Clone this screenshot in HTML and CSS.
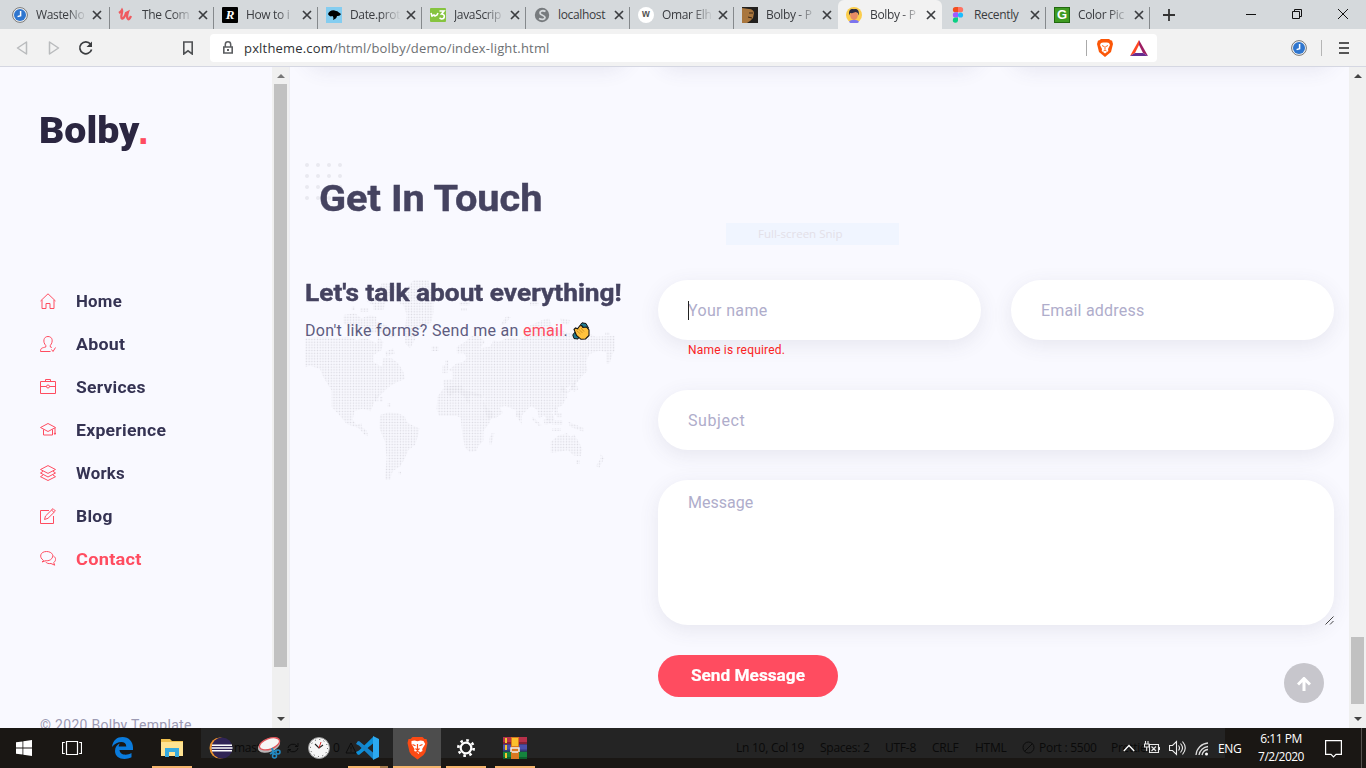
FILE: index.html
```html
<!DOCTYPE html>
<html lang="en">
<head>
<meta charset="utf-8">
<title>Bolby - Portfolio</title>
<link rel="stylesheet" href="styles.css">
</head>
<body>
<svg class="defs" width="0" height="0">
  <defs>
    <symbol id="x" viewBox="0 0 10 10"><path d="M1 1l8 8M9 1L1 9" stroke="#3b3d40" stroke-width="1.7" fill="none"/></symbol>
    <symbol id="clockblue" viewBox="0 0 16 16"><circle cx="8" cy="8" r="7.4" fill="#f4f4f4" stroke="#777" stroke-width="1"/><circle cx="8" cy="8" r="6" fill="#2f76cf"/><path d="M8.600 4v4.600L5.600 9.600" stroke="#fff" stroke-width="1.500" fill="none"/></symbol>
    <symbol id="lion" viewBox="0 0 20 24"><path d="M5 1h10l2 2 2 0 1 4-2 9-2 3-6 4.500-6-4.500-2-3L0 7l1-4 2 0z" fill="#fb4a14"/><path d="M4 5l3-.5 3 .8 3-.8 3 .5 1.700 3-3 5 .3 2-3 1.500-1 1.500-1.300-1.500-3-1.500.3-2-3-5z" fill="#fff"/><path d="M5 8.500l3 1.300M15 8.500l-3 1.300M10 8v6M8 12.500l2 2 2-2M7.500 16.500l2.500-1 2.500 1" stroke="#fb4a14" stroke-width="1.200" fill="none"/></symbol>
    <symbol id="lion-small" viewBox="0 0 16 18"><path d="M4 0h8l2 1.500h1L16 5l-2 8-6 5-6-5L0 5l1-3.500h1z" fill="#fb5607"/><path d="M4 4l2-.5h4l2 .5 1 2-2 4 .3 2L8 14.500 4.700 12 5 10 3 6z" fill="#fff"/><path d="M5 6.500l2 1M11 6.500l-2 1M8 7v3.500M6.500 12L8 11l1.500 1" stroke="#fb5607" stroke-width=".9" fill="none"/></symbol>
    <pattern id="dots" x="15" y="30" width="8.300" height="8.300" patternUnits="userSpaceOnUse"><rect x="2" y="2" width="4.200" height="4.200" fill="#dad9e1"/></pattern>
  </defs>
</svg>

<div class="tabs">
  <div class="tab first"><svg class="fav"><use href="#clockblue"/></svg><span class="name">WasteNo</span><svg class="close"><use href="#x"/></svg></div>
  <div class="tab"><svg class="fav" viewBox="0 0 16 16"><path d="M1 6c1.500-1 2.500-2 3-3 1 2-1.500 5-.5 8 1 2 3.500-1 4.500-5l2-1c-1 3-1 6 0 7s2-1 3-3" stroke="#ef5a5f" stroke-width="2.300" fill="none"/></svg><span class="name">The Com</span><svg class="close"><use href="#x"/></svg></div>
  <div class="tab"><span class="fav sq-r">R</span><span class="name">How to i</span><svg class="close"><use href="#x"/></svg></div>
  <div class="tab"><svg class="fav" viewBox="0 0 16 16"><path fill="#84cdf0" d="M0 0h16v16H0z"/><path d="M2 7c1-3 5-5 8-3 2 0 3 2 5 3-1 2-3 2-4 2 0 2-2 3-4 4 1-2 0-4-1-4-1 1-3 0-4-2z"/></svg><span class="name">Date.prot</span><svg class="close"><use href="#x"/></svg></div>
  <div class="tab"><svg class="fav" viewBox="0 0 16 16"><rect y="1" width="16" height="14" rx="1" fill="#86c440"/><path d="M1 6l1 3 2-1 1 1 2-1 1-2M9.500 4h4.500l-2.500 3c4 0 3.500 5 0 5l-2-1" stroke="#fff" stroke-width="1.600" fill="none"/></svg><span class="name">JavaScrip</span><svg class="close"><use href="#x"/></svg></div>
  <div class="tab"><svg class="fav" viewBox="0 0 16 16"><circle cx="8" cy="8" r="7.200" fill="#777b7e"/><path d="M11.500 4.500C9 3 6 4 6 6c0 2.500 5 2 5 4.500C11 12.500 8 13 5 11.500" stroke="#d5d9dc" stroke-width="1.800" fill="none"/></svg><span class="name full">localhost</span><svg class="close"><use href="#x"/></svg></div>
  <div class="tab"><span class="fav round-w">w</span><span class="name">Omar Elh</span><svg class="close"><use href="#x"/></svg></div>
  <div class="tab nosep"><svg class="fav" viewBox="0 0 16 16"><path fill="#22201e" d="M0 0h16v16H0z"/><path fill="#a9763d" d="M0 1l7 1c3 0 5 2 5 4l-1 5-3 3-3 2H0z"/><path d="M7 6h4M6 10l4 1" stroke="#3a2616" stroke-width="1"/></svg><span class="name">Bolby - P</span><svg class="close"><use href="#x"/></svg></div>
  <div class="tab active nosep"><svg class="fav" viewBox="0 0 16 16"><circle cx="8" cy="8" r="8" fill="#fbcd4c"/><path d="M3 15c1-3 9-3 10 0a8 8 0 0 1-10 0z" fill="#7b74ee"/><ellipse cx="8" cy="8.300" rx="3.800" ry="4.700" fill="#e88b66"/><path d="M3.300 8.500C2 2 6 1.500 8 2.300 11 1 14 4 12.600 8.500l-.8-2.500-2-1-4 1.200-1.600-.2z" fill="#2c2a45"/></svg><span class="name">Bolby - P</span><svg class="close"><use href="#x"/></svg></div>
  <div class="tab"><svg class="fav" viewBox="0 0 16 16"><path fill="#f24e1e" d="M8 0H5.500a2.500 2.500 0 0 0 0 5.300H8z"/><path fill="#ff7262" d="M8 0h2.500a2.500 2.500 0 0 1 0 5.300H8z"/><path fill="#a259ff" d="M8 5.300H5.500a2.500 2.500 0 0 0 0 5.300H8z"/><circle cx="10.500" cy="8" r="2.600" fill="#1abcfe"/><path fill="#0acf83" d="M8 10.600H5.500A2.600 2.600 0 1 0 8 13.400z"/></svg><span class="name full">Recently</span><svg class="close"><use href="#x"/></svg></div>
  <div class="tab"><span class="fav sq-g">G</span><span class="name">Color Pic</span><svg class="close"><use href="#x"/></svg></div>
  <svg class="plus" viewBox="0 0 12 12"><path d="M6 0v12M0 6h12" stroke="#333" stroke-width="1.800"/></svg>
  <div class="winctl">
    <svg viewBox="0 0 12 12"><path d="M1 6.500h10" stroke="#111"/></svg>
    <svg viewBox="0 0 12 12"><path d="M1.500 3.500h7v7h-7zM3.500 3.500v-2h7v7h-2" fill="none" stroke="#111"/></svg>
    <svg viewBox="0 0 12 12"><path d="M1 1l10 10M11 1L1 11" stroke="#111"/></svg>
  </div>
</div>

<div class="toolbar">
  <svg class="nav" viewBox="0 0 14 16"><path d="M11.500 2v12L2.500 8z" fill="none" stroke="#b9bbbd" stroke-width="1.500" stroke-linejoin="round"/></svg>
  <svg class="nav" viewBox="0 0 14 16"><path d="M2.500 2v12l9-6z" fill="none" stroke="#b9bbbd" stroke-width="1.500" stroke-linejoin="round"/></svg>
  <svg class="reload" viewBox="0 0 16 16"><path d="M12.500 4A6 6 0 1 0 13.600 9.500" fill="none" stroke="#3b3d40" stroke-width="1.700"/><path d="M14 1.500V7H8.500z" fill="#3b3d40"/></svg>
  <svg class="mark" viewBox="0 0 12 14"><path d="M1.800 1h8.400v12L6 9.800 1.800 13z" fill="none" stroke="#505255" stroke-width="1.600"/></svg>
  <div class="address">
    <svg class="lock" viewBox="0 0 12 14"><path d="M3.300 6V3.500a2.700 2.700 0 0 1 5.400 0V6" fill="none" stroke="#5b5d60" stroke-width="1.500"/><path d="M1.800 6h8.400v6H1.800z" fill="none" stroke="#5b5d60" stroke-width="1.600"/><path d="M5 8h2v2H5z" fill="#5b5d60"/></svg>
    <span class="url"><b>pxltheme.com</b>/html/bolby/demo/index-light.html</span>
    <i class="bar"></i>
    <svg class="shield"><use href="#lion-small"/></svg>
    <svg class="bat" viewBox="0 0 18 16"><path d="M9 0L0 16l5-3L9 5z" fill="#ff4724"/><path d="M9 0l9 16-5-3-4-8z" fill="#9e1f63"/><path d="M0 16l5-3h8l5 3z" fill="#662d91"/></svg>
  </div>
  <svg class="ext"><use href="#clockblue"/></svg>
  <i class="bar2"></i>
  <svg class="menu" viewBox="0 0 10 12"><path d="M0 1h10M0 6h10M0 11h10" stroke="#555" stroke-width="1.900"/></svg>
</div>

<div class="page">
  <aside class="side">
    <div class="logo"><b>Bolby</b><span>.</span></div>
    <nav class="links">
      <a><svg viewBox="0 0 16 16"><path d="M.5 8L8 .8 15.500 8M2 7v8.500h4v-5h4v5h4V7"/></svg><span class="l1">Home</span></a>
      <a><svg viewBox="0 0 16 16"><path d="M10.500 15.500H.5c0-4 2-3.500 5.300-4.500v-1.500C2.500 6 3.500.5 8 .5s5.500 5 2.300 9V11l1.500.5M11.500 13.500l1.500 2 2.500-4"/></svg><span class="l2">About</span></a>
      <a><svg viewBox="0 0 16 16"><path d="M.5 2.500h15v12H.5zM5.500 2.500v-2h5v2M.5 7.500h6M9.500 7.500h6"/><circle cx="8" cy="7.500" r="1.500"/></svg><span class="l3">Services</span></a>
      <a><svg viewBox="0 0 16 16"><path d="M8 1.500l7.500 4L8 9.500.5 5.500zM3.500 7.500V13h9V7.500M15 6v4.500M14 12l1-1.500.700 1.500z"/></svg><span class="l4">Experience</span></a>
      <a><svg viewBox="0 0 16 16"><path d="M8 .6l7.500 3.900L8 8.400.5 4.500zM3 6.300L.5 8 8 12l7.500-4L13 6.300M3 10L.5 11.700 8 15.500l7.500-3.800L13 10"/></svg><span class="l5">Works</span></a>
      <a><svg viewBox="0 0 16 16"><path d="M9 2.500H.5v13h13V8M4.500 11.500L5.500 8 13 .6l2.400 2.400L8 10.300zM11.500 2l2.500 2.400"/></svg><span class="l6">Blog</span></a>
      <a class="on"><svg viewBox="0 0 16 16"><path d="M3.500 9.500C-1.500 6 .5.500 6.500.5s8.500 5 4 8.200C8.500 10 7 9.800 5.800 9.600L2 11z"/><path d="M13.500 5c3 2 2.500 5 .2 6.500l1 2.700-3.700-1.700c-2.500.4-4.500-.3-5.500-1.800"/></svg><span class="l7">Contact</span></a>
    </nav>
    <p class="copy">© 2020 Bolby Template</p>
  </aside>
  <div class="scroll s1"><i class="up"></i><i class="thumb t1"></i><i class="dn"></i></div>

  <main class="main">
    <div class="cards"><i></i><i></i><i></i></div>
    <svg class="deco" viewBox="0 0 38 38"><g fill="#e9e9f0"><circle cx="2" cy="2" r="2"/><circle cx="13" cy="2" r="2"/><circle cx="24" cy="2" r="2"/><circle cx="35" cy="2" r="2"/><circle cx="2" cy="13" r="2"/><circle cx="13" cy="13" r="2"/><circle cx="24" cy="13" r="2"/><circle cx="35" cy="13" r="2"/><circle cx="2" cy="24" r="2"/><circle cx="13" cy="24" r="2"/><circle cx="24" cy="24" r="2"/><circle cx="35" cy="24" r="2"/><circle cx="2" cy="35" r="2"/><circle cx="13" cy="35" r="2"/><circle cx="24" cy="35" r="2"/><circle cx="35" cy="35" r="2"/></g></svg>
    <h2 class="title"><span>Get In Touch</span></h2>
    <div class="contact">
      <div class="intro">
        <svg class="map" viewBox="15 30 930 600"><g fill="url(#dots)">
          <path d="M15 205l45-5 50 5 35-5 25 10 30-5 30 15 5-20 15 15-5 25-25 15 0 20 25 15 5-25 25 0 20 15 15 25 5 22-25 10-25 15-20 20-22 22-10 30-25-8-25 8-5 25 12 15 15-5 0 12 15 10 5 18-10-3-20-22-35-12-25-30-20-20v-50l-25-40-10-25-30-10-30 10-20 12z"/>
          <path d="M130 135l35-5 20 15 25-10 20 5 0 15 20 5 20 15 20 20-15 10-30-20-30 5-20-15-30 5-35-20zM155 110h10v10h-10zM180 115h25v10h-25zM200 95l30-20 15-35 35 0 10 15-30 30-10 35-30 0 0-15zM255 245l25-10 5 15-25 10z"/>
          <path d="M295 75l25-20 20-25h45l5 20 10 30 0 50-5 25-25 20-20 10-5 25-15 25-15-15 0-45 5-40-10-30-20-10z"/>
          <path d="M395 228h20v15h-20zM225 375h10v20h-10zM240 380h8v15h-8zM262 400h10v10h-10z"/>
          <path d="M240 435l25-8 30 3 20 10 5 15 15 10 23 10-3 20-10 30-20 15-10 25-15 25-17 10-8 10-5 25 5 35-20-5 0-50 5-50-5-50-17-40zM295 605h8v8h-8z"/>
          <path d="M412 380l22-30 26-3 25-3 5 15 40 10 15 5 15 40 22 14-15 33-17 22 0 30-15 15-5 15-20 4-15-14-8-40-5-50-12-5-53 0-7-20z"/>
          <path d="M575 490h8l-8 33h-7v-20zM478 95h30v12h-30zM483 115h18v8h-18z"/>
          <path d="M430 345v-15l28-3v-22l-12-5 24-20 20-5 10-10-8-15-22 0 0-20 25-15 20-18 25 3 15 15-15 20 30-5 10-20 15 5 20-8 22-5 25 8 20-20 10-25 35-15 20-5 10 25 25 10 25 10 60 0 20 10 65-3 23 13-5 25-30 12-12 35-10 0v-35l-20-5-30 10-10 25 5 25-20 20-15 20 8 15-15 10-10-20-15 10 5 25-15 25-20 8-10 12 8 20-12 15-20-25-15 8-5-25-18-12-10 8-18 20 0 30-12-20-5-25-20-8-15-5-15 5 10 15-20 15-25 5-12-30 0-35-28-5-12-3-5 12 5 10-10 2-10-20-20-12-15 5-10 8z"/>
          <path d="M427 285h15v25h-15zM435 270h10v30h-10zM600 165l20-28 12 5-20 23zM690 95h25v12h-25zM780 145l30 5-5 15-20-5zM915 187h15v8h-15z"/>
          <path d="M785 345l20 18 15-25 10-12-8 30-22 15-18-8zM762 410h12v25h-12zM770 430h15v12h-15zM697 440l28 25-8 3-20-18zM730 450l15-5 10 15-20 5zM757 450h30v15h-30zM757 475h25v8h-25zM805 455l45 18v12l-40-15zM648 425h12v15h-12z"/>
          <path d="M752 515l25-20 25-5 10 12 10-10 15 25 10 20-5 22-23-3-15-15-30 5-22 2zM828 570h12v12h-12zM900 550l13 15-15 28-10-5 12-20z"/>
        </g></svg>
        <h3><span>Let's talk about everything!</span></h3>
        <p>Don't like forms? Send me an <a>email</a>. <svg class="wave" viewBox="0 0 18 18"><path d="M8.500 2.500L10 .8 14 1.500 16.500 6 14.500 8z" fill="#207a91" stroke="#111"/><path d="M.8 13l1.700-2.500 4.500 4-1 2.500-4-.5z" fill="#207a91" stroke="#111"/><path d="M2 7.500l1.500-1.500 2 .8L8 3.500l2 .5.800 1.500L14.500 5l2.500 3v5.500L13.500 17 9 17.300 4.500 13.500z" fill="#ffc23d" stroke="#111" stroke-width="1.100"/><path d="M4.500 8.500l4 3.500M6.500 7l4 4M9 6l3 3.500" stroke="#c3841e" stroke-width=".8"/></svg></p>
      </div>
      <form class="form">
        <div class="row">
          <div class="col"><div class="field focus"><span class="p1">Your name</span></div><small>Name is required.</small></div>
          <div class="col"><div class="field"><span class="p2">Email address</span></div></div>
        </div>
        <div class="field subject"><span class="p3">Subject</span></div>
        <div class="field message"><span class="p4">Message</span><svg class="grip" viewBox="0 0 9 9"><path d="M.5 8.500l8-8M5 8.500L8.500 5" stroke="#444"/></svg></div>
        <div class="send"><span>Send Message</span></div>
      </form>
    </div>
    <div class="snip">Full-screen Snip</div>
    <div class="totop"><svg viewBox="0 0 14 14"><path d="M7 14V2M1 7.500L7 1.500l6 6" fill="none" stroke="#fff" stroke-width="3"/></svg></div>
  </main>
  <div class="scroll s2"><i class="up"></i><i class="thumb t2"></i><i class="dn"></i></div>
</div>

<div class="taskbar">
  <div class="ghost"><span class="g1">master</span><svg class="sync" viewBox="0 0 14 12"><path d="M2 6a5 4.500 0 0 1 9-2M12 6a5 4.500 0 0 1-9 2M12 1v3.500H9M2 11V7.500h3" fill="none" stroke="#0c0c0c"/></svg><span class="g2">0</span><svg class="warn" viewBox="0 0 12 12"><path d="M6 1l5 10H1zM6 4.500v3M6 8.500v1.200" fill="none" stroke="#0c0c0c"/></svg><span class="g3">Ln 10, Col 19</span><span class="g4">Spaces: 2</span><span class="g5">UTF-8</span><span class="g6">CRLF</span><span class="g7">HTML</span><svg class="no" viewBox="0 0 13 13"><circle cx="6.500" cy="6.500" r="5.500" fill="none" stroke="#0c0c0c"/><path d="M2.600 10.400l7.800-7.800" stroke="#0c0c0c"/></svg><span class="g8">Port : 5500</span><span class="g9">Prettier</span></div>
  <div class="apps">
    <span class="sys"><svg width="16" height="16" viewBox="0 0 16 16"><path fill="#fff" d="M0 2.300l6.500-.9v6.200H0zM7.300 1.300L16 0v7.600H7.300zM0 8.400h6.500v6.200L0 13.700zM7.300 8.400H16V16l-8.700-1.200z"/></svg></span>
    <span class="sys"><svg width="20" height="14" viewBox="0 0 20 14"><path d="M4.500.5h11v13h-11zM2.800 1.500H.5v11h2.300M17.200 1.500h2.300v11h-2.300" fill="none" stroke="#fff" stroke-width="1.200"/></svg></span>
    <span class="app"><svg width="21" height="22" viewBox="0 0 21 22"><path fill="#0a7bdc" d="M0 10C1 3 5 0 10.500 0 17 0 21 5 21 10.500V13H7.500c.3 5 7 6 12 3v4.300C12 24 3 21.500 3 14c0-4 2-6.500 5-7.500-1 1-1.200 2-1.300 3h7.600c0-6-9.300-6-14.300.5z"/></svg></span>
    <span class="app run"><svg width="22" height="18" viewBox="0 0 22 18"><path fill="#f0c04d" d="M0 0h9l2 2h11v5H0z"/><path fill="#ffe391" d="M0 3h22v14H0z"/><path fill="#36abe0" d="M4 9h14v9h-4v-5H8v5H4z"/></svg></span>
    <span class="app"><svg width="24" height="22" viewBox="0 0 24 22"><circle cx="11" cy="11" r="10.500" fill="#ef9430"/><circle cx="13" cy="11" r="10.500" fill="#302456"/><path d="M3 8.300h20M2.500 11h21M3 13.700h20" stroke="#fff" stroke-width="1.500"/></svg></span>
    <span class="app"><svg width="25" height="22" viewBox="0 0 25 22"><ellipse cx="12" cy="8.500" rx="11.500" ry="6.500" fill="#b9b5b7" transform="rotate(-20 12 8.500)"/><ellipse cx="12.500" cy="6.800" rx="10.500" ry="5.300" fill="#f6f6f6" stroke="#e0565b" stroke-width="1.300" transform="rotate(-20 12.500 6.800)"/><path d="M15 11l2 7M20 13l-7 4" stroke="#238cc5" stroke-width="2"/><circle cx="17.500" cy="19" r="2" fill="none" stroke="#238cc5" stroke-width="1.500"/><circle cx="21" cy="15" r="2" fill="none" stroke="#238cc5" stroke-width="1.500"/></svg></span>
    <span class="app"><svg width="22" height="22" viewBox="0 0 22 22"><circle cx="11" cy="11" r="10.500" fill="#f7f7f7" stroke="#999"/><circle cx="11" cy="11" r="8.500" fill="none" stroke="#444" stroke-dasharray="1 3.450"/><path d="M7 7l4 4 4-3" stroke="#222" stroke-width="1.100" fill="none"/><path d="M11 11l2-6" stroke="#d33"/></svg></span>
    <span class="app run code"><svg width="25" height="24" viewBox="0 0 25 24"><path d="M18 1L4 14.500 1 16l1.500 2.500L4 19 18 7.500z" fill="#0d8fd8"/><path d="M18 23L4 9.500 1 8l1.500-2.500L4 5l14 11.500z" fill="#1684ca"/><path d="M18 0l6 3v18l-6 3z" fill="#2ca9f0"/></svg></span>
    <span class="app run cur"><svg width="21" height="24"><use href="#lion"/></svg></span>
    <span class="app run"><svg width="18" height="18" viewBox="0 0 18 18"><circle cx="9" cy="9" r="5.300" fill="none" stroke="#fff" stroke-width="2.200"/><circle cx="9" cy="9" r="7.700" fill="none" stroke="#fff" stroke-width="2.600" stroke-dasharray="2.600 3.448"/></svg></span>
    <span class="app run"><svg width="24" height="22" viewBox="0 0 24 22"><path fill="#b7314a" d="M0 0h24v7.300H0z"/><path fill="#4b50ab" d="M0 7.300h24v7.400H0z"/><path fill="#15843e" d="M0 14.700h24V22H0z"/><path fill="#0004" d="M0 5h24v2.300H0zM0 12.500h24v2.200H0zM0 20h24v2H0z"/><path fill="#f4c430" d="M2 1h2v5H2zM2 8h2v5H2zM2 16h2v5H2z"/><path fill="#d97820" d="M8 0h8v22H8z"/><path fill="#fbc02d" d="M9 1h6v8H9z"/><path d="M8 15v-4h8v4M9 15h6" stroke="#eee" stroke-width="1.500" fill="none"/></svg></span>
  </div>
  <div class="tray">
    <svg width="12" height="8" viewBox="0 0 12 8"><path d="M.8 7L6 1.500 11.200 7" fill="none" stroke="#fff" stroke-width="1.300"/></svg>
    <svg width="16" height="14" viewBox="0 0 16 14"><path d="M5.500 3.500h9v8h-9zM15.500 6v3M7.500 5.500l4.500 4.500M12 5.500L7.500 10M1.500 0v3M4 0v3M.5 3h4.500v3H.5zM2.700 6v4" fill="none" stroke="#e8e8e8" stroke-width="1.100"/></svg>
    <svg width="17" height="16" viewBox="0 0 17 16"><path d="M.5 5.500h3l4-4v13l-4-4h-3zM9.500 5.500q2 2.500 0 5M11.500 3.500q4 4.500 0 9M13.500 1.500q5.500 6.500 0 13" fill="none" stroke="#eee" stroke-width="1.100"/></svg>
    <svg width="14" height="15" viewBox="0 0 14 15"><path d="M1 14A13 13 0 0 1 13 2M4 14a10 10 0 0 1 9-8.500M7 14a7 7 0 0 1 6-5.500" fill="none" stroke="#ddd" stroke-width="1.300"/><circle cx="11.500" cy="13" r="1.500" fill="#fff"/></svg>
    <span class="eng">ENG</span>
    <span class="time"><span>6:11 PM</span><span>7/2/2020</span></span>
    <svg class="note" width="17" height="19" viewBox="0 0 17 19"><path d="M.6.6h15.800v13.800h-5.400L8.500 17l-2.500-2.600H.6z" fill="none" stroke="#fff" stroke-width="1.200"/></svg>
    <i class="peek"></i>
  </div>
</div>
</body>
</html>
```
FILE: styles.css
```css
* { box-sizing: border-box; }
body { margin: 0; width: 1366px; height: 768px; overflow: hidden; font-family: Roboto, "Noto Sans", sans-serif; background: #f9f9ff; display: flex; flex-direction: column; }
svg { display: block; flex: none; }
h2, h3, p { margin: 0; }
.defs { position: absolute; }

/* browser tabs */
.tabs { display: flex; height: 29px; background: #d5d9dc; font: 12px "Open Sans", sans-serif; color: #3a3c40; flex: none; }
.tab { position: relative; width: 104px; height: 29px; display: flex; align-items: center; padding: 1px 6px 0 8px; flex: none; }
.tab.first { width: 110px; padding-left: 12px; padding-right: 8px; }
.tab::after { content: ""; position: absolute; right: 0; top: 7px; height: 22px; width: 1px; background: #85898c; }
.tab.nosep::after { display: none; }
.tab.active { background: #f2f2f2; border-radius: 6px 6px 0 0; }
.fav { width: 16px; height: 16px; flex: none; }
.name { width: 51px; margin-left: 8px; white-space: nowrap; line-height: 18px; letter-spacing: -0.35px; -webkit-mask-image: linear-gradient(90deg, #000 60%, transparent 100%); mask-image: linear-gradient(90deg, #000 60%, transparent 100%); }
.name.full { -webkit-mask-image: none; mask-image: none; }
.close { width: 10px; height: 10px; margin-left: auto; }
.sq-r { background: #000; color: #fff; font: italic bold 13px/16px "Liberation Serif", serif; text-align: center; border-radius: 1px; }
.sq-g { background: #3f9b22; border: 1px solid #216910; color: #fff; font: bold 13px/14px "Liberation Sans", sans-serif; text-align: center; }
.round-w { background: #fff; border-radius: 50%; color: #555; font: bold 10px/14px "Liberation Sans", sans-serif; text-align: center; }
.plus { width: 12px; height: 12px; margin: 9px 0 0 13px; }
.winctl { margin-left: auto; display: flex; gap: 34px; padding: 8px 17px 0 0; }
.winctl svg { width: 12px; height: 12px; }

/* browser toolbar */
.toolbar { height: 38px; background: #f2f2f2; border-bottom: 1px solid #d5d7e2; display: flex; align-items: center; padding: 0 17px 0 15px; flex: none; }
.nav { width: 14px; height: 16px; margin-right: 18px; }
.reload { width: 16px; height: 16px; margin-right: 88px; margin-left: -1px; }
.mark { width: 12px; height: 14px; margin-right: 16px; }
.address { width: 947px; height: 28px; background: #fff; border-radius: 4px; display: flex; align-items: center; padding: 0 9px 0 12px; }
.lock { width: 12px; height: 14px; }
.url { margin-left: 10px; font: 13px "Open Sans", sans-serif; color: #6d7073; letter-spacing: 0.18px; }
.url b { font-weight: 400; color: #303235; }
.bar { margin-left: auto; width: 1px; height: 16px; background: #aaa; }
.shield { width: 16px; height: 18px; margin: 0 17px 0 10px; }
.bat { width: 18px; height: 16px; }
.ext { width: 16px; height: 16px; margin-left: 134px; }
.bar2 { width: 1px; height: 16px; background: #b5b5b5; margin-left: 14px; }
.menu { width: 10px; height: 12px; margin-left: auto; }

/* page */
.page { display: flex; height: 661px; flex: none; overflow: hidden; }
.side { width: 272px; padding: 40px 0 0 40px; height: 661px; display: flex; flex-direction: column; flex: none; }
.logo { display: flex; font-size: 36px; line-height: 49px; height: 48px; color: #2b2641; }
.logo b { width: 99px; font-weight: 900; transform: scaleX(1.09); transform-origin: left; margin-left: -1px; }
.logo span { font: bold 38px/48px "Liberation Sans", sans-serif; }
.logo span, .side .on { color: #ff4c60; }
.links { margin-top: 125px; display: flex; flex-direction: column; }
.links a { display: flex; align-items: center; height: 43px; gap: 20px; color: #353353; font-weight: 700; font-size: 16px; letter-spacing: 0.25px; }
.links span { transform: scaleX(1.09); transform-origin: left; }
.links .l1, .links .l5 { transform: scaleX(1.05); }
.links .l2 { transform: scaleX(1.11); }
.links .l4 { transform: scaleX(1.1); }
.links .l7 { transform: scaleX(1.135); }
.links svg { width: 16px; height: 16px; fill: none; stroke: #ff4c60; stroke-width: 1; margin-top: -2px; }
.copy { margin-top: 134px; font-size: 14px; line-height: 20px; color: #9c9ab3; white-space: nowrap; letter-spacing: 0.3px; }
.scroll { width: 17px; height: 661px; background: #f0f0f0; display: flex; flex-direction: column; align-items: center; padding: 7px 0; flex: none; }
.s1 { width: 18px; border-right: 1px solid #ececf1; }
.up, .dn { border: 4px solid transparent; width: 0; height: 0; }
.up { border-bottom-color: #777; border-top: 0; margin-bottom: 6px; }
.dn { border-top-color: #444; border-bottom: 0; margin-top: auto; }
.s2 .up { border-bottom-color: #444; }
.thumb { width: 13px; background: #c1c1c1; }
.t1 { height: 583px; }
.t2 { height: 67px; margin-top: 553px; }

.main { position: relative; width: 1059px; height: 661px; padding: 0 15px; flex: none; overflow: hidden; }
.cards { height: 0; display: grid; grid-template-columns: repeat(3, 323px); gap: 30px; }
.cards i { height: 60px; margin-top: -62px; border-radius: 20px; box-shadow: 0 5px 20px rgba(69,67,120,.1); }
.deco { position: absolute; left: 15px; top: 96px; width: 38px; height: 38px; }
.title { position: relative; padding: 106px 0 0 14px; font-size: 36px; line-height: 52px; color: #454360; font-weight: 700; }
.title span, .intro h3 span { display: inline-block; transform: scaleX(1.104); transform-origin: left; -webkit-text-stroke: 0.4px #454360; }
.contact { display: grid; grid-template-columns: 323px 676px; gap: 30px; margin-top: 55px; }
.intro { position: relative; height: 200px; color: #5e5c7f; white-space: nowrap; }
.map { position: absolute; left: 0; top: 0; width: 310px; height: 200px; }
.intro h3 { position: relative; font-size: 23px; line-height: 28px; color: #454360; }
.intro h3 span { transform: scaleX(1.143); }
.intro p { position: relative; font-size: 16px; line-height: 24px; margin-top: 11px; letter-spacing: 0.29px; }
.intro a { color: #ff4c60; }
.wave { display: inline-block; width: 18px; height: 18px; vertical-align: -4px; }
.row { display: grid; grid-template-columns: 323px 323px; gap: 30px; height: 110px; }
.field { position: relative; height: 60px; border-radius: 30px; background: #fff; box-shadow: 0 5px 20px rgba(69,67,96,.1); padding: 0 30px; line-height: 61px; font-size: 16px; letter-spacing: 0.22px; color: #afadcb; }
.p1 { letter-spacing: 0.35px; }
.p3 { letter-spacing: 0.6px; }
.p4 { letter-spacing: 0; }
.focus::before { content: ""; position: absolute; left: 30px; top: 21px; width: 1px; height: 19px; background: #222; }
small { display: block; margin: 2px 0 0 30px; font-size: 12px; line-height: 17px; color: #f22; letter-spacing: 0.18px; }
.message { height: 145px; margin-top: 30px; line-height: 45px; }
.grip { position: absolute; right: 0; bottom: 0; width: 9px; height: 9px; }
.send { width: 180px; height: 42px; margin-top: 30px; background: #ff4c60; border-radius: 21px; color: #fff; font-weight: 700; font-size: 16px; line-height: 41px; text-align: center; }
.send span { display: inline-block; transform: scaleX(1.077); -webkit-text-stroke: 0.2px #fff; }
.snip { position: absolute; left: 436px; top: 156px; width: 173px; height: 22px; background: #f0f5ff; color: #e3e0e8; font: 11.500px/22px "Open Sans", sans-serif; padding-left: 32px; }
.totop { position: absolute; left: 994px; top: 596px; width: 40px; height: 40px; border-radius: 50%; background: #c7c6cc; display: flex; align-items: center; justify-content: center; }
.totop svg { width: 14px; height: 14px; margin-top: 2px; }

/* taskbar */
.taskbar { position: relative; height: 40px; background: #1a1714; flex: none; display: flex; justify-content: space-between; }
.ghost { position: absolute; left: 201px; top: 0; width: 1024px; height: 30px; padding: 9px 0 0 33px; background: #242424; color: #0a0a0a; font: 12px/21px "Open Sans", sans-serif; display: flex; align-items: center; white-space: nowrap; letter-spacing: -0.25px; }
.ghost span { flex: none; }
.g1 { width: 52px; }
.sync { width: 14px; height: 12px; }
.g2 { width: 12px; margin-left: 33px; }
.warn { width: 12px; height: 12px; }
.g3 { width: 84px; margin-left: 379px; }
.g4 { width: 65px; }
.g5 { width: 47px; }
.g6 { width: 43px; }
.g7 { width: 47px; }
.no { width: 13px; height: 13px; margin-right: 4px; }
.g8 { width: 72px; }
.apps { position: relative; display: flex; }
.sys, .app { height: 40px; display: flex; align-items: center; justify-content: center; }
.sys { width: 48px; }
.sys + .app { margin-left: 2px; }
.app { width: 49px; position: relative; }
.run::after { content: ""; position: absolute; left: 5px; bottom: 0; width: 40px; height: 2px; background: #f5b56c; }
.code::after { background: linear-gradient(90deg, #f5b56c 80%, #a77c4c 80%); }
.cur { background: #4d4d4d; width: 48px; margin: 0 0 0 1px; }
.cur::after { left: 0; width: 48px; }
.tray { position: relative; display: flex; align-items: center; color: #fff; font: 12px "Open Sans", sans-serif; padding-right: 4px; }
.tray > svg { margin-right: 9px; }
.eng { width: 33px; letter-spacing: -0.4px; }
.time { width: 54px; display: flex; flex-direction: column; text-align: center; line-height: 18px; letter-spacing: -0.5px; margin: 0 17px 0 3px; }
.tray .note { margin: 2px 0 0; }
.peek { width: 1px; height: 40px; background: #55524f; margin-left: 19px; }
```
